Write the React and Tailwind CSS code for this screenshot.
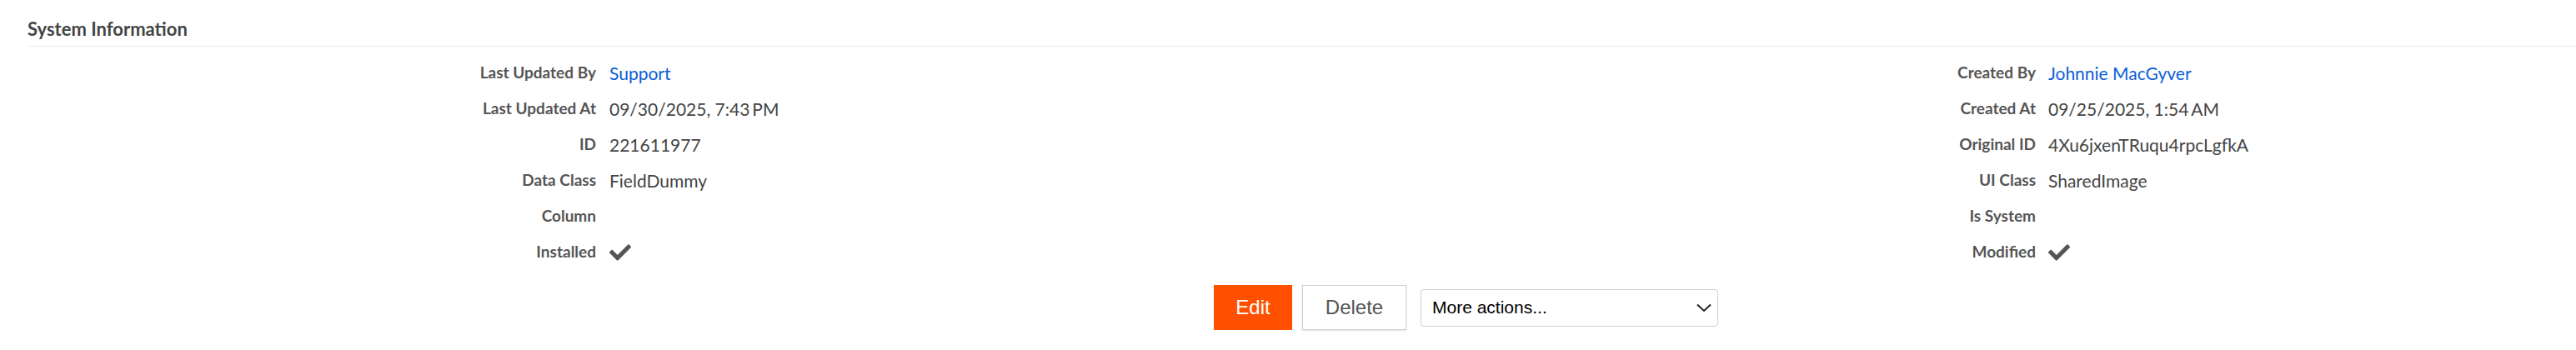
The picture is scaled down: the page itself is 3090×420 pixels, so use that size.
import React from 'react';
import { FaCheck } from 'react-icons/fa';

const leftRows = [
    { label: 'Last Updated By', value: 'Support', link: true },
    { label: 'Last Updated At', value: '09/30/2025, 7:43', suffix: 'PM' },
    { label: 'ID', value: '221611977' },
    { label: 'Data Class', value: 'FieldDummy' },
    { label: 'Column', value: '' },
    { label: 'Installed', check: true },
];

const rightRows = [
    { label: 'Created By', value: 'Johnnie MacGyver', link: true },
    { label: 'Created At', value: '09/25/2025, 1:54', suffix: 'AM' },
    { label: 'Original ID', value: '4Xu6jxenTRuqu4rpcLgfkA' },
    { label: 'UI Class', value: 'SharedImage' },
    { label: 'Is System', value: '' },
    { label: 'Modified', check: true },
];

const Value = ({ row }) => {
    if (row.check) return <FaCheck size={26} className="text-[#555]" />;
    if (row.link) return <span className="text-[#0b5ed7]">{row.value}</span>;
    return (
        <span>
            {row.value}
            {row.suffix && <span className="ml-[3px]">{row.suffix}</span>}
        </span>
    );
};

const App = () => {
    return (
        <div className="w-[3090px] h-[420px] bg-white font-['Lato','Liberation_Sans',sans-serif]">
            <div className="ml-[33px] pt-[22px] pb-[7px] border-b border-[#ececec]">
                <h2 className="text-[22px] leading-[26px] font-bold text-[#444]">System Information</h2>
            </div>

            {/* details grid */}
            <div className="ml-[33px] mt-[10px] grid grid-cols-[682px_1045px_682px_1fr] auto-rows-[43px]">
                {leftRows.map((row, i) => (
                    <React.Fragment key={row.label}>
                        <div className="flex items-center justify-end text-[19px] font-bold text-[#555]">{row.label}</div>
                        <div className="flex items-center pl-[16px] text-[21px] text-[#444]">
                            <Value row={row} />
                        </div>
                        <div className="flex items-center justify-end text-[19px] font-bold text-[#555]">{rightRows[i].label}</div>
                        <div className="flex items-center pl-[15px] text-[21px] text-[#444]">
                            <Value row={rightRows[i]} />
                        </div>
                    </React.Fragment>
                ))}
            </div>

            {/* actions */}
            <div className="flex items-center pl-[1456px] mt-[18px] font-['Liberation_Sans',Arial,sans-serif]">
                <button className="w-[94px] h-[54px] bg-[#ff5000] text-white text-[24px]">Edit</button>
                <button className="ml-[12px] w-[125px] h-[54px] bg-white border border-[#cfcfcf] text-[#555] text-[24px] shadow-[0_1px_2px_rgba(0,0,0,0.12)]">
                    Delete
                </button>
                <div className="ml-[17px] w-[357px] h-[45px] flex items-center justify-between border border-[#cfcfcf] rounded-[4px] pl-[13px] pr-[7px] text-[21px] text-black bg-white">
                    <span>More actions...</span>
                    <svg width="18" height="11" viewBox="0 0 18 11" fill="none">
                        <path d="M1 1.5 L9 9 L17 1.5" stroke="#222" strokeWidth="2" />
                    </svg>
                </div>
            </div>
        </div>
    );
};

export default App;
